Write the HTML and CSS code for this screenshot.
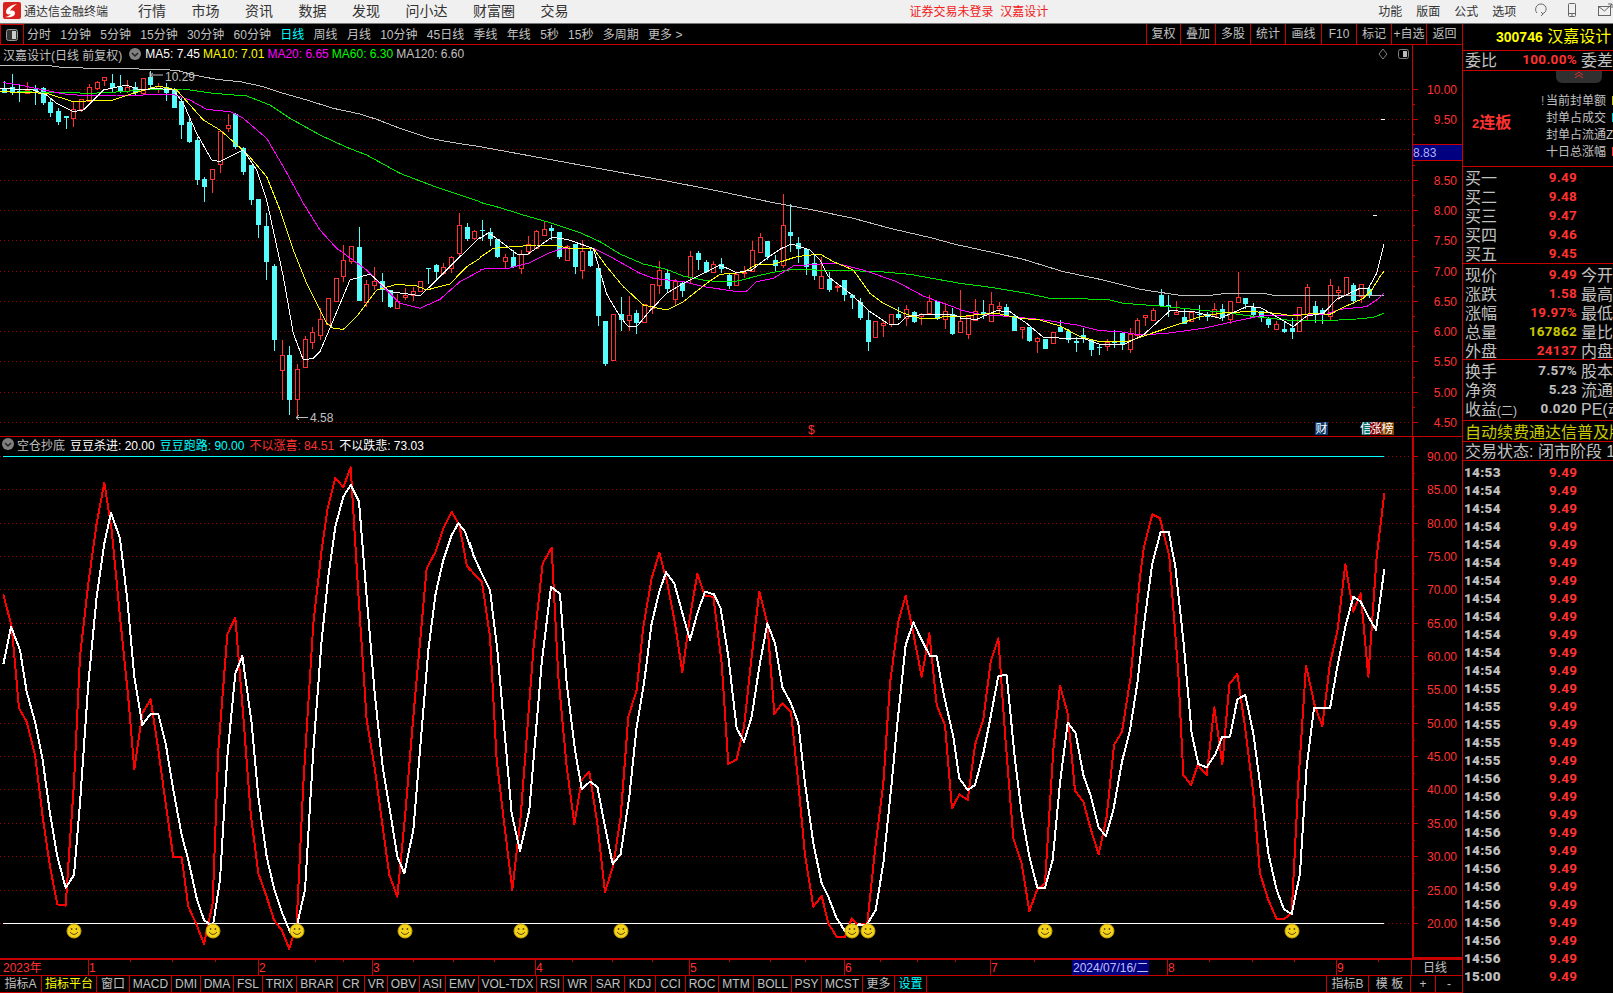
FILE: index.html
```html
<!DOCTYPE html>
<html lang="zh-CN">
<head>
    <meta charset="UTF-8">
    <title>通达信金融终端</title>
    <link rel="stylesheet" href="styles.css">
</head>
<body>
    <div class="titlebar">
        <svg class="logo" width="18" height="17" viewBox="0 0 18 17">
            <rect width="18" height="17" rx="2" fill="#d8201c"/>
            <path d="M14 2 C8 3 3 6 3 10 C3 12 5 13 8 12 C6 14 4 15 2 15 C6 16 12 15 12 11 C12 9 10 8 7 9 C8 6 11 4 14 2 Z" fill="#fff"/>
        </svg>
        <span class="app-name">通达信金融终端</span>
        <nav class="menu">
            <span>行情</span><span>市场</span><span>资讯</span><span>数据</span>
            <span>发现</span><span>问小达</span><span>财富圈</span><span>交易</span>
        </nav>
        <span class="login-note">证券交易未登录&nbsp;&nbsp;汉嘉设计</span>
        <div class="sys-menu">
            <span>功能</span><span>版面</span><span>公式</span><span>选项</span>
        </div>
        <svg class="sys-icon icon-help" width="16" height="16" viewBox="0 0 16 16" fill="none" stroke="#666">
            <path d="M4 11 C1 8 3 2 8 2 C13 2 15 8 11 11 L9 12 M8 14 L10 12 L8 10"/>
        </svg>
        <svg class="sys-icon icon-phone" width="10" height="16" viewBox="0 0 10 16" fill="none" stroke="#666">
            <rect x="1.5" y="1.5" width="7" height="13" rx="1"/><path d="M1.5 11.5 H8.5 M4 13 H6"/>
        </svg>
        <svg class="sys-icon icon-mail" width="16" height="16" viewBox="0 0 16 16" fill="none" stroke="#666">
            <rect x="1.5" y="4.5" width="12" height="9"/><path d="M1.5 4.5 L7.5 9 L15 2 M11 2 H15 V6"/>
        </svg>
    </div>

    <div class="main">
        <div class="chart-col">
            <div class="toolbar">
                <div class="layout-btn">
                    <svg width="12" height="12" viewBox="0 0 12 12"><rect x="0.5" y="0.5" width="11" height="11" rx="2" fill="#333" stroke="#999"/><rect x="6" y="2" width="4" height="8" fill="#ccc"/></svg>
                </div>
                <div class="periods">
                    <span>分时</span><span>1分钟</span><span>5分钟</span><span>15分钟</span><span>30分钟</span><span>60分钟</span>
                    <span class="on">日线</span><span>周线</span><span>月线</span><span>10分钟</span><span>45日线</span><span>季线</span>
                    <span>年线</span><span>5秒</span><span>15秒</span><span>多周期</span><span>更多 &gt;</span>
                </div>
                <div class="tool-btns">
                    <span>复权</span><span>叠加</span><span>多股</span><span>统计</span><span>画线</span><span>F10</span><span>标记</span><span>+自选</span><span>返回</span>
                </div>
            </div>

            <div class="pane pane-price">
                <div class="pane-head price-head">
                    <span class="stock-title">汉嘉设计(日线 前复权)</span>
                    <svg class="fold" width="12" height="12" viewBox="0 0 12 12"><circle cx="6" cy="6" r="6" fill="#808080"/><path d="M3 5 L6 8 L9 5" fill="none" stroke="#222" stroke-width="1.5"/></svg>
                    <span class="c-white">MA5: 7.45</span>
                    <span class="c-yellow">MA10: 7.01</span>
                    <span class="c-magenta">MA20: 6.65</span>
                    <span class="c-green">MA60: 6.30</span>
                    <span class="c-gray">MA120: 6.60</span>
                </div>
                <svg class="pane-tools" width="32" height="12" viewBox="0 0 32 12" fill="none" stroke="#808080">
                    <path d="M5 1 L9 6 L5 11 L1 6 Z"/>
                    <rect x="20.5" y="1.5" width="10" height="9" rx="2"/><rect x="25" y="3" width="4" height="6" fill="#bbb" stroke="none"/>
                </svg>
                <svg id="price-chart" width="1462" height="391" viewBox="0 45 1462 391"></svg>
            </div>

            <div class="pane pane-ind">
                <div class="pane-head ind-head">
                    <svg class="fold" width="12" height="12" viewBox="0 0 12 12"><circle cx="6" cy="6" r="6" fill="#808080"/><path d="M3 5 L6 8 L9 5" fill="none" stroke="#222" stroke-width="1.5"/></svg>
                    <span class="c-gray">空仓抄底</span>
                    <span class="c-white">豆豆杀进: 20.00</span>
                    <span class="c-cyan">豆豆跑路: 90.00</span>
                    <span class="c-red">不以涨喜: 84.51</span>
                    <span class="c-white">不以跌悲: 73.03</span>
                </div>
                <svg id="ind-chart" width="1462" height="521" viewBox="0 437 1462 521"></svg>
            </div>

            <svg id="time-axis" width="1462" height="16" viewBox="0 959 1462 16"></svg>

            <div class="tabs">
                <span>指标A</span><span class="c-yellow">指标平台</span><span>窗口</span><span>MACD</span><span>DMI</span><span>DMA</span>
                <span>FSL</span><span>TRIX</span><span>BRAR</span><span>CR</span><span>VR</span><span>OBV</span><span>ASI</span><span>EMV</span>
                <span>VOL-TDX</span><span>RSI</span><span>WR</span><span>SAR</span><span>KDJ</span><span>CCI</span><span>ROC</span><span>MTM</span>
                <span>BOLL</span><span>PSY</span><span>MCST</span><span>更多</span><span class="c-cyan">设置</span><span class="tab-gap"></span>
                <span>指标B</span><span>模 板</span><span>+</span><span>-</span>
            </div>
        </div>

        <div class="quote-panel">
            <div class="q-title"><b>300746</b> 汉嘉设计</div>
            <div class="q-row q-weibi"><span class="lbl">委比</span><span class="val c-red">100.00%</span><span class="rlbl">委差</span></div>
            <div class="q-info">
                <div class="fold-tab"><svg width="10" height="8" viewBox="0 0 10 8" fill="none" stroke="#e03030"><path d="M1 4 L5 1 L9 4 M1 7 L5 4 L9 7"/></svg></div>
                <div class="board"><small>2</small>连板</div>
                <ul class="seal-list">
                    <li><i class="warn">!</i>当前封单额<i class="sliver bg-yellow"></i></li>
                    <li>封单占成交<i class="sliver bg-cyan"></i></li>
                    <li>封单占流通Z</li>
                    <li>十日总涨幅<i class="sliver bg-red"></i></li>
                </ul>
            </div>
            <div class="q-sec q-buy">
                <div class="q-row"><span class="lbl">买一</span><span class="val c-red">9.49</span></div>
                <div class="q-row"><span class="lbl">买二</span><span class="val c-red">9.48</span></div>
                <div class="q-row"><span class="lbl">买三</span><span class="val c-red">9.47</span></div>
                <div class="q-row"><span class="lbl">买四</span><span class="val c-red">9.46</span></div>
                <div class="q-row"><span class="lbl">买五</span><span class="val c-red">9.45</span></div>
            </div>
            <div class="q-sec">
                <div class="q-row"><span class="lbl">现价</span><span class="val c-red">9.49</span><span class="rlbl">今开</span></div>
                <div class="q-row"><span class="lbl">涨跌</span><span class="val c-red">1.58</span><span class="rlbl">最高</span></div>
                <div class="q-row"><span class="lbl">涨幅</span><span class="val c-red">19.97%</span><span class="rlbl">最低</span></div>
                <div class="q-row"><span class="lbl">总量</span><span class="val c-olive">167862</span><span class="rlbl">量比</span></div>
                <div class="q-row"><span class="lbl">外盘</span><span class="val c-red">24137</span><span class="rlbl">内盘</span></div>
            </div>
            <div class="q-sec q-fin">
                <div class="q-row"><span class="lbl">换手</span><span class="val">7.57%</span><span class="rlbl">股本</span></div>
                <div class="q-row"><span class="lbl">净资</span><span class="val">5.23</span><span class="rlbl">流通</span></div>
                <div class="q-row"><span class="lbl">收益<small>(二)</small></span><span class="val">0.020</span><span class="rlbl">PE(动)</span></div>
            </div>
            <div class="q-line q-ad c-olive">自动续费通达信普及版</div>
            <div class="q-line q-state">交易状态: 闭市阶段 1</div>
            <div class="ticks" id="ticks"></div>
        </div>
    </div>

    <script src="chart.js"></script>
</body>
</html>
```
FILE: styles.css
```css
* {
    margin: 0;
    padding: 0;
    box-sizing: border-box;
}

html, body {
    height: 993px;
    overflow: hidden;
}

body {
    width: 1613px;
    background: #000;
    color: #c0c0c0;
    font-family: "Liberation Sans", "Noto Sans CJK SC", sans-serif;
    font-size: 12px;
}

.c-white { color: #fff; }
.c-yellow { color: #ffff00; }
.c-magenta { color: #ff00ff; }
.c-green { color: #00ff00; }
.c-gray { color: #c0c0c0; }
.c-cyan { color: #00ffff; }
.c-red { color: #ff3232; }
.c-olive { color: #c8c800; }

.bg-yellow { background: #c8c800; }
.bg-cyan { background: #00c8c8; }
.bg-red { background: #ff3232; }

/* top window bar */
.titlebar {
    height: 24px;
    background: #f0f0f0;
    border-bottom: 1px solid #777;
    display: flex;
    align-items: center;
    padding-bottom: 3px;
    color: #333;
    white-space: nowrap;
    overflow: hidden;
}

.titlebar > * {
    flex: none;
}

.logo {
    margin-left: 3px;
}

.app-name {
    margin-left: 3px;
}

.menu {
    display: flex;
    gap: 25.5px;
    margin-left: 30px;
    font-size: 14px;
}

.login-note {
    margin-left: 341px;
    color: #f02020;
}

.sys-menu {
    display: flex;
    gap: 14px;
    margin-left: 330px;
}

.icon-help { margin-left: 17px; }
.icon-phone { margin-left: 18px; }
.icon-mail { margin-left: 20px; }

.main {
    display: flex;
    height: 969px;
}

.chart-col {
    width: 1463px;
    border-right: 1px solid #c80000;
    display: flex;
    flex-direction: column;
    flex: none;
}

/* period toolbar */
.toolbar {
    height: 21px;
    border-bottom: 1px solid #c80000;
    display: flex;
    align-items: center;
    flex: none;
}

.layout-btn {
    width: 24px;
    height: 20px;
    border: 1px solid #c80000;
    border-bottom: none;
    display: flex;
    align-items: center;
    justify-content: center;
}

.periods {
    display: flex;
    gap: 9.3px;
    margin-left: 3px;
    margin-top: -2px;
}

.periods .on {
    color: #00ffff;
}

.tool-btns {
    margin-left: auto;
    display: grid;
    grid-template-columns: 34px 35px 35px 35px 36px 35px 35px 35px 36px;
    height: 20px;
}

.tool-btns span {
    border-left: 1px solid #c80000;
    text-align: center;
    line-height: 21px;
}

/* chart panes */
.pane {
    position: relative;
    border-bottom: 1px solid #c80000;
    flex: none;
}

.pane svg {
    display: block;
}

.pane-price {
    height: 392px;
}

.pane-ind {
    height: 522px;
}

.pane-head {
    position: absolute;
    left: 3px;
    top: 0;
    height: 18px;
    display: flex;
    align-items: center;
    white-space: nowrap;
}

.pane-head .fold {
    flex: none;
}

.price-head {
    gap: 3px;
}

.price-head .fold {
    margin: 0 1px 0 3px;
}

.price-head .stock-title {
    margin-right: 1px;
}

.ind-head {
    left: 2px;
    top: -3px;
    height: 20px;
    gap: 5px;
}

.ind-head .fold {
    margin-right: -2px;
}

.pane-tools {
    position: absolute;
    left: 1378px;
    top: 3px;
}

#time-axis {
    display: block;
    flex: none;
}

.grid-line {
    stroke: #990000;
    stroke-dasharray: 1 3;
    shape-rendering: crispEdges;
}

.axis-line {
    stroke: #c80000;
    shape-rendering: crispEdges;
}

.axis-label {
    fill: #ff3232;
    font-size: 12px;
    text-anchor: end;
    dominant-baseline: central;
}

.mark-label {
    fill: #c0c0c0;
    font-size: 12px;
    dominant-baseline: central;
}

.month-label {
    fill: #ff3232;
    font-size: 12px;
    dominant-baseline: central;
}

.cur-price {
    fill: #b0b0ff;
    font-size: 12px;
    dominant-baseline: central;
}

.badge-text {
    fill: #fff;
    font-size: 12px;
    text-anchor: middle;
    dominant-baseline: central;
}

/* indicator tabs */
.tabs {
    height: 18px;
    flex: none;
    border-top: 1px solid #c80000;
    border-bottom: 1px solid #c80000;
    display: grid;
    grid-template-columns: 42px 55px 33px 42px 29px 33px 29px 34px 41px 27px 23px 32px 26px 33px 58px 27px 28px 33px 31px 30px 33px 35px 38px 30px 41px 32px 32px 400px 42px 42px 25px 26px;
    text-align: center;
    line-height: 16px;
}

.tabs span {
    border-right: 1px solid #c80000;
}

.tabs span:last-child {
    border-right: none;
}

/* right hand quote panel */
.quote-panel {
    width: 150px;
    overflow: hidden;
    flex: none;
    white-space: nowrap;
}

.q-title {
    height: 27px;
    border-bottom: 1px solid #c80000;
    padding-left: 33px;
    font-size: 16px;
    line-height: 26px;
    color: #ffff00;
}

.q-title b {
    font-size: 14px;
}

.q-row {
    display: flex;
    align-items: center;
    height: 19px;
    padding-left: 2px;
    font-size: 16px;
}

.q-weibi {
    height: 20px;
    padding-bottom: 3px;
    border-bottom: 1px solid #c80000;
}

.lbl {
    width: 36px;
    flex: none;
}

.lbl small {
    font-size: 12px;
}

.val {
    width: 76px;
    flex: none;
    text-align: right;
    font-family: Roboto, "Liberation Sans", sans-serif;
    font-weight: bold;
    font-size: 13.5px;
    letter-spacing: 0.3px;
}

.rlbl {
    margin-left: 4px;
}

.q-info {
    position: relative;
    height: 96px;
    border-bottom: 1px solid #c80000;
    display: flex;
    align-items: center;
}

.fold-tab {
    position: absolute;
    left: 93px;
    top: 0;
    width: 46px;
    height: 12px;
    background: #303030;
    border-radius: 0 0 6px 6px;
    text-align: center;
    line-height: 8px;
}

.board {
    margin: 4px 0 0 9px;
    color: #ff3232;
    font-size: 16px;
    font-weight: bold;
}

.board small {
    font-size: 13px;
}

.seal-list {
    list-style: none;
    position: absolute;
    left: 83px;
    top: 22px;
    line-height: 17px;
}

.seal-list .sliver {
    display: inline-block;
    width: 2px;
    height: 9px;
    margin-left: 6px;
}

.seal-list .warn {
    font-style: normal;
    color: #999;
    position: absolute;
    left: -5px;
}

.q-sec {
    border-bottom: 1px solid #c80000;
}

.q-buy {
    padding-bottom: 1px;
}

.q-fin {
    padding-bottom: 3px;
}

.q-line {
    padding-left: 2px;
    font-size: 16px;
    border-bottom: 1px solid #c80000;
}

.q-ad {
    height: 21px;
    line-height: 23px;
}

.q-state {
    height: 19px;
    line-height: 19px;
}

.ticks {
    padding-top: 2px;
}

.tick-row {
    display: flex;
    height: 18px;
    align-items: center;
    padding-left: 1px;
    font-family: Roboto, "Liberation Sans", sans-serif;
    font-weight: bold;
    font-size: 13.5px;
    letter-spacing: 0.3px;
}

.tick-row b {
    width: 85px;
    flex: none;
}

.tick-row span {
    color: #ff3232;
}
```
FILE: chart.js
```js
const NS = 'http://www.w3.org/2000/svg';

function el(parent, tag, attrs, text) {
    const node = document.createElementNS(NS, tag);
    for (const key in attrs) node.setAttribute(key, attrs[key]);
    if (text !== undefined) node.textContent = text;
    parent.appendChild(node);
    return node;
}

function hline(svg, y, x1, x2, cls) {
    return el(svg, 'line', { x1: x1, x2: x2, y1: y + 0.5, y2: y + 0.5, class: cls });
}

// Candles: [high, bodyTop, bodyBottom, low, 'c' down / 'r' up], in thirds of a px from yo
const CANDLES = [
    [60, [
        [62,88,98,100,'c'],[42,82,95,105,'c'],[75,92,95,125,'c'],[65,90,100,100,'r'],[75,88,92,135,'c'],
        [82,84,130,135,'c'],[115,127,158,170,'c'],[145,152,186,195,'c'],[168,168,173,207,'c'],[125,146,173,200,'r'],
        [118,118,146,155,'r'],[72,80,122,125,'r'],[62,67,83,90,'r'],[52,52,60,78,'r'],[42,70,85,95,'c'],
        [45,82,92,100,'c'],[60,82,92,100,'r'],[65,80,100,105,'c'],[55,55,100,105,'r'],[32,52,76,85,'c'],
        [68,78,86,100,'r'],[68,82,100,122,'c'],[85,90,143,145,'c'],[110,123,194,237,'c'],[175,186,246,248,'c'],
        [232,240,360,375,'c'],[350,357,380,425,'c'],[327,327,358,400,'r'],[212,214,313,338,'r'],[162,196,205,215,'r'],
        [160,162,260,266,'c'],[262,265,335,345,'c'],[315,316,420,435,'c'],[418,418,495,534,'c'],[460,498,605,660,'c'],
        [612,618,840,873,'c'],[840,886,930,1020,'r'],[858,885,1020,1065,'c'],[912,928,1018,1070,'r'],[828,838,920,922,'r'],
        [800,817,845,867,'r'],[745,778,824,840,'r'],[715,715,792,795,'r'],[655,655,722,722,'r'],[555,601,647,665,'r'],
        [559,559,603,612,'r'],[502,561,723,723,'c'],[660,673,725,740,'r'],[622,664,675,690,'r'],[640,664,690,725,'c'],
        [690,690,741,745,'c'],[703,722,743,743,'r'],[685,705,711,720,'r'],[682,694,705,722,'r'],[664,664,692,697,'r'],
        [625,625,628,672,'c'],[612,615,636,657,'c'],[610,620,638,645,'r'],[588,592,623,640,'r'],[460,496,580,590,'r'],
        [490,502,538,542,'c'],[510,512,535,540,'r']
    ]],
    [180, [
        [120,150,153,182,'c'],[145,156,176,198,'c'],[178,178,232,234,'c'],[222,232,242,265,'r'],[210,232,262,264,'c'],
        [210,221,265,282,'r'],[168,192,212,226,'r'],[150,154,204,206,'r'],[125,148,164,164,'r'],[135,144,153,180,'c'],
        [156,156,232,236,'c'],[196,198,239,239,'r'],[193,193,261,282,'c'],[180,214,270,297,'r'],[200,214,259,262,'c'],
        [255,264,408,438,'c'],[423,423,552,558,'c'],[403,403,539,539,'r'],[352,403,420,453,'c'],[348,406,419,452,'r'],
        [390,400,430,462,'c'],[372,372,425,430,'r'],[313,313,385,402,'r'],[243,270,315,342,'r'],[268,279,328,335,'c'],
        [298,302,356,376,'r'],[305,310,334,350,'c'],[214,229,292,310,'r'],[214,220,240,270,'c'],[240,246,277,278,'c'],
        [243,252,275,275,'r'],[235,253,267,278,'c'],[282,285,318,327,'c'],[278,282,314,314,'r'],[259,275,279,294,'r'],
        [183,211,273,275,'r'],[160,172,215,215,'r'],[183,183,232,240,'c'],[225,240,258,272,'c'],[42,136,254,263,'r'],
        [72,156,168,215,'c'],[172,190,207,250,'c'],[208,208,261,285,'c'],[225,250,288,300,'c'],[230,289,323,323,'r'],
        [276,297,330,336,'c'],[312,319,322,336,'r'],[300,300,345,363,'c'],[343,345,354,387,'c'],[355,366,414,421,'c'],
        [390,420,486,513,'c'],[424,424,470,470,'r'],[422,429,434,471,'r'],[403,403,432,441,'r'],[382,402,414,420,'c'],
        [375,388,414,438,'r'],[393,396,425,428,'c'],[400,401,407,435,'r'],[345,364,400,400,'r'],[364,364,417,420,'c'],
        [368,394,416,447,'r'],[383,402,462,465,'c'],[330,424,455,455,'r']
    ]],
    [220, [
        [285,288,342,356,'r'],[238,272,300,302,'r'],[240,277,284,296,'c'],[215,253,302,302,'r'],[247,258,264,280,'r'],
        [252,262,290,292,'c'],[285,288,333,333,'c'],[322,322,328,358,'r'],[320,322,363,365,'c'],[350,355,363,400,'r'],
        [356,358,387,387,'c'],[337,337,368,368,'r'],[300,322,336,337,'c'],[328,332,360,368,'c'],[352,364,369,395,'c'],
        [324,345,358,368,'c'],[358,360,390,408,'c'],[375,380,382,405,'c'],[358,366,379,392,'r'],[330,366,370,385,'c'],
        [338,338,372,390,'c'],[324,343,388,398,'r'],[293,301,345,355,'r'],[285,286,290,318,'r'],[265,269,300,302,'r'],
        [208,225,259,262,'c'],[225,255,260,290,'c'],[243,276,282,285,'r'],[265,291,311,312,'c'],[275,277,302,302,'r'],
        [255,282,286,300,'c'],[275,282,290,302,'c'],[248,268,288,290,'r'],[252,267,293,302,'c'],[243,243,296,312,'r'],
        [155,232,245,245,'r'],[234,234,252,268,'c'],[250,262,285,288,'c'],[274,274,290,305,'c'],[292,297,315,325,'c'],
        [302,312,326,326,'r'],[305,327,336,338,'c'],[295,324,335,356,'c'],[262,262,332,332,'r'],[192,202,282,302,'r'],
        [244,258,284,310,'c'],[265,270,280,312,'c'],[178,196,288,300,'r'],[197,210,215,240,'r'],[172,172,224,224,'r'],
        [190,196,243,252,'c'],[193,193,228,248,'r'],[195,207,228,235,'c']
    ]]
];

// Moving averages: flat x,y lists per stretch, in thirds of a px from the stretch origin
const PRICE_ORIGINS = [[0, 60], [480, 180], [960, 220]];
const MA_LINES = [
    { color: '#c0c0c0', parts: [
        [0,16,140,16,185,22,280,25,485,28,535,32,580,45,650,58,720,65,790,80,850,100,920,120,1000,145,1080,162,1130,178,1200,205,1290,235,1360,248,1440,260],
        [545,0,700,30,880,68,1000,90,1120,115,1230,145,1360,175,1440,197],
        [0,76,110,100,190,118,310,155,430,180,540,208,660,226,750,226,800,220,910,220,940,226,1272,228]
    ] },
    { color: '#00e600', parts: [
        [60,95,130,97,210,98,270,100,370,95,440,88,550,87,640,100,740,108,810,135,870,175,960,225,1040,262,1100,285,1200,340,1300,378,1380,405,1440,425],
        [0,67,60,83,130,105,210,128,300,158,360,185,420,222,490,252,560,268,610,288,680,302,740,306,780,302,830,288,880,277,940,268,1040,271,1190,274,1290,283,1440,310],
        [0,190,100,203,200,220,270,235,360,236,450,240,490,250,600,258,700,268,800,278,900,292,1000,302,1100,302,1190,297,1240,292,1272,280]
    ] },
    { color: '#ff00ff', parts: [
        [10,68,60,75,130,90,200,103,280,108,350,105,430,105,520,103,570,120,620,148,690,155,730,175,800,235,850,320,910,430,960,510,1010,565,1100,630,1140,670,1200,730,1260,745,1320,718,1380,665,1440,633],
        [0,270,20,265,85,265,150,248,210,218,250,205,340,205,400,235,480,280,520,295,610,305,670,320,760,333,800,333,830,305,880,295,940,258,1020,252,1070,250,1150,270,1250,305,1330,348,1440,388],
        [0,270,60,283,130,288,240,298,350,315,420,332,480,335,540,345,620,340,730,325,820,305,900,288,1000,285,1100,282,1140,268,1220,260,1250,240,1272,220]
    ] },
    { color: '#ffff00', parts: [
        [0,95,60,97,140,100,220,125,280,122,340,120,400,100,475,78,530,90,610,180,660,210,740,280,800,350,840,450,880,570,920,670,980,790,1000,805,1030,808,1070,770,1130,690,1190,673,1250,678,1280,690,1350,672,1400,620,1440,595],
        [0,232,40,205,100,200,170,195,220,195,270,205,340,205,380,260,430,320,490,375,560,390,610,365,680,310,720,283,790,277,830,253,880,253,950,230,1020,222,1060,245,1120,270,1170,340,1210,370,1270,400,1320,415,1370,415,1400,408,1440,410],
        [0,290,60,283,110,280,180,295,240,300,300,318,360,350,420,365,500,365,560,345,640,318,720,290,800,277,880,275,950,280,1000,288,1060,280,1110,283,1150,262,1210,235,1235,210,1260,170,1272,153]
    ] },
    { color: '#ffffff', parts: [
        [0,85,100,90,140,105,170,130,220,155,250,150,310,90,380,75,420,90,470,85,520,90,550,130,590,220,635,300,660,305,730,270,770,330,800,420,850,650,880,820,910,900,940,895,960,875,1000,780,1050,660,1110,642,1170,695,1260,707,1300,670,1380,590,1440,532],
        [0,175,25,158,60,183,110,222,140,225,215,172,260,178,340,205,380,342,420,410,445,440,470,440,510,392,560,340,610,310,650,290,720,255,770,278,815,270,860,235,905,205,935,192,990,210,1020,240,1045,290,1110,340,1170,395,1225,432,1255,433,1280,410,1340,402,1400,402,1440,410],
        [0,295,50,298,110,272,150,275,200,310,250,352,320,355,370,355,420,373,490,375,550,345,630,272,700,275,780,295,860,260,900,262,950,290,1000,320,1040,288,1090,280,1130,238,1200,205,1225,205,1250,160,1272,72]
    ] }
];

const IND_ORIGINS = [[0, 450], [470, 450], [940, 450]];
const IND_LINES = [
    { color: '#ff0000', parts: [
        [10,433,35,530,45,640,57,775,80,815,105,915,128,1100,150,1250,172,1363,197,1367,208,1200,222,1000,240,620,265,400,290,220,313,98,335,240,360,500,385,745,403,958,427,790,452,748,475,900,497,1060,520,1222,545,1222,565,1370,590,1425,612,1482,638,1360,655,900,682,553,706,503,730,800,752,1090,775,1270,800,1340,822,1410,845,1440,868,1497,890,1420,910,1000,940,520,965,300,982,180,1006,83,1030,112,1052,52,1075,430,1100,810,1125,960,1148,1130,1168,1275,1192,1340,1215,1100,1240,800,1280,355,1307,305,1330,235,1355,185,1378,225,1400,345,1410,360],
        [0,358,36,397,60,560,80,930,105,1140,127,1320,152,1100,190,600,218,340,245,293,265,680,290,950,313,1122,335,990,358,965,382,1120,405,1327,430,1245,452,1100,475,800,500,720,520,530,545,385,568,308,592,400,615,520,637,667,660,500,682,372,705,438,730,440,755,640,775,942,800,928,822,830,845,620,868,425,892,520,913,792,937,760,963,785,985,1000,1005,1215,1030,1370,1055,1338,1075,1420,1100,1460,1125,1460,1145,1405,1165,1425,1192,1420,1215,1200,1240,1000,1260,700,1285,515,1307,437,1330,550,1355,680,1378,550,1400,765,1410,790],
        [15,825,36,1075,58,1033,83,1050,105,885,130,808,152,635,175,565,195,850,220,1165,245,1240,268,1383,292,1318,315,1300,340,900,360,707,383,790,405,1022,430,1055,453,1140,476,1213,500,1100,522,885,546,845,572,680,600,380,612,290,637,193,660,205,688,320,715,670,730,975,753,1005,773,945,800,975,823,772,847,943,868,703,892,672,915,830,940,1030,960,1270,985,1350,1010,1407,1032,1407,1055,1390,1075,1000,1098,647,1125,770,1147,828,1170,640,1192,545,1216,343,1240,485,1262,430,1285,680,1310,320,1333,130]
    ] },
    { color: '#ffffff', parts: [
        [10,643,33,530,60,600,80,725,105,815,128,930,150,1090,172,1220,197,1313,222,1275,240,1060,265,700,290,440,313,280,333,188,360,265,382,450,403,680,427,825,452,792,475,792,497,880,520,1020,545,1155,565,1230,590,1345,612,1410,628,1422,640,1420,660,1290,682,920,706,670,727,618,755,820,775,1040,800,1220,822,1315,845,1385,870,1445,890,1430,915,1320,940,900,965,570,985,380,1006,230,1030,140,1052,105,1077,155,1100,440,1125,740,1148,950,1168,1070,1192,1220,1213,1270,1240,1140,1260,900,1285,600,1307,430,1330,330,1355,255,1375,220,1395,245,1410,290],
        [0,280,10,315,35,370,60,420,82,600,105,860,125,1090,150,1203,178,1080,215,640,243,410,270,432,290,700,315,900,335,1017,360,995,382,1010,405,1130,428,1242,452,1212,478,1040,500,830,522,700,545,520,568,425,588,367,613,400,640,500,660,570,682,490,705,425,732,433,752,475,775,620,800,835,822,875,845,800,868,650,892,520,915,580,937,712,963,760,985,820,1005,1000,1030,1180,1055,1300,1075,1340,1100,1405,1125,1443,1145,1435,1165,1425,1190,1425,1217,1380,1240,1240,1265,1000,1280,840,1307,585,1330,517,1355,570,1380,618,1400,618,1410,675],
        [15,750,40,860,58,985,83,1020,105,1005,130,910,152,800,175,678,200,675,225,930,245,1090,268,1220,292,1313,315,1313,338,1230,360,1000,383,818,407,850,430,975,453,1040,476,1133,498,1158,520,1080,546,935,570,840,592,700,615,500,637,340,662,245,686,245,706,350,730,570,755,850,775,942,800,952,825,915,847,860,870,860,892,748,916,735,940,850,960,1000,985,1210,1010,1320,1032,1378,1055,1392,1080,1270,1100,950,1122,775,1170,775,1192,650,1216,530,1240,440,1262,455,1285,500,1308,540,1333,358]
    ] }
];

function polyline(svg, line, origins, width) {
    const points = [];
    line.parts.forEach((part, p) => {
        for (let i = 0; i < part.length; i += 2) {
            points.push((origins[p][0] + part[i] / 3) + ',' + (origins[p][1] + part[i + 1] / 3));
        }
    });
    el(svg, 'polyline', {
        points: points.join(' '),
        fill: 'none',
        stroke: line.color,
        'stroke-width': width,
        'stroke-linejoin': 'round',
        'shape-rendering': 'crispEdges'
    });
}

function drawCandles(svg) {
    let i = 0;
    CANDLES.forEach(([yo, rows]) => {
        rows.forEach(([hi, top, bot, lo, kind]) => {
            const cx = Math.round(4 + 7.71 * i) + 0.5;
            const yHi = Math.round(yo + hi / 3), yTop = Math.round(yo + top / 3);
            const yBot = Math.max(Math.round(yo + bot / 3), yTop + 1), yLo = Math.round(yo + lo / 3);
            const color = kind === 'c' ? '#54fcfc' : '#ff3232';
            el(svg, 'line', { x1: cx, x2: cx, y1: yHi, y2: yTop, stroke: color, 'shape-rendering': 'crispEdges' });
            el(svg, 'line', { x1: cx, x2: cx, y1: yBot, y2: yLo, stroke: color, 'shape-rendering': 'crispEdges' });
            if (kind === 'c') {
                el(svg, 'rect', { x: cx - 2.5, y: yTop, width: 5, height: yBot - yTop, fill: color, 'shape-rendering': 'crispEdges' });
            } else {
                el(svg, 'rect', { x: cx - 2, y: yTop + 0.5, width: 4, height: yBot - yTop, fill: '#000', stroke: color, 'shape-rendering': 'crispEdges' });
            }
            i++;
        });
    });
}

function drawAxis(svg, levels, y1, y2) {
    el(svg, 'line', { x1: 1412.5, x2: 1412.5, y1: y1, y2: y2, class: 'axis-line' });
    levels.forEach(([y, label], n) => {
        hline(svg, y, 0, 1412, 'grid-line');
        hline(svg, y, 1412, 1418, 'axis-line');
        if (label) el(svg, 'text', { x: 1457, y: y + 0.5, class: 'axis-label' }, label);
        if (n < levels.length - 1) {
            hline(svg, Math.round((y + levels[n + 1][0]) / 2), 1412, 1415, 'axis-line');
        }
    });
}

function drawPrice() {
    const svg = document.getElementById('price-chart');
    drawAxis(svg, [
        [89, '10.00'], [119, '9.50'], [149, ''], [180, '8.50'], [210, '8.00'], [240, '7.50'],
        [271, '7.00'], [301, '6.50'], [331, '6.00'], [361, '5.50'], [392, '5.00'], [422, '4.50']
    ], 45, 436);

    // current cursor price on the axis
    el(svg, 'rect', { x: 1413, y: 144, width: 49, height: 16, fill: '#000080' });
    hline(svg, 144, 1412, 1462, 'axis-line');
    hline(svg, 160, 1412, 1462, 'axis-line');
    el(svg, 'text', { x: 1413, y: 152.5, class: 'cur-price' }, '8.83');

    drawCandles(svg);
    MA_LINES.forEach(line => polyline(svg, line, PRICE_ORIGINS, 1));

    // high/low marks
    el(svg, 'path', { d: 'M150 72 V79 M150 75 H163 M150 75 L153 73 M150 75 L153 77', stroke: '#c0c0c0', fill: 'none' });
    el(svg, 'text', { x: 165, y: 76.5, class: 'mark-label' }, '10.29');
    el(svg, 'path', { d: 'M296 417.5 H308 M296 417.5 L299 415 M296 417.5 L299 420', stroke: '#c0c0c0', fill: 'none' });
    el(svg, 'text', { x: 310, y: 418, class: 'mark-label' }, '4.58');

    // white dashes at the right edge
    el(svg, 'rect', { x: 1381, y: 119, width: 4, height: 1, fill: '#fff' });
    el(svg, 'rect', { x: 1373, y: 215, width: 4, height: 1, fill: '#fff' });
    el(svg, 'text', { x: 808, y: 430, fill: '#ff3232', 'font-size': 12, 'dominant-baseline': 'central' }, '$');

    // news / list badges
    [[1315, 13, '#0a3a6e', '财'], [1362, 8, '#0a7070', '信'], [1370, 11, '#800000', '涨'], [1381, 13, '#804000', '榜']].forEach(([x, w, bg, t]) => {
        el(svg, 'rect', { x: x, y: 422, width: w, height: 13, fill: bg });
        el(svg, 'text', { x: x + w / 2, y: 428.5, class: 'badge-text' }, t);
    });
}

function smiley(svg, cx, cy) {
    el(svg, 'circle', { cx: cx, cy: cy, r: 7, fill: '#f2d21a', stroke: '#c8a400' });
    el(svg, 'circle', { cx: cx - 2.4, cy: cy - 2, r: 0.9, fill: '#604800' });
    el(svg, 'circle', { cx: cx + 2.4, cy: cy - 2, r: 0.9, fill: '#604800' });
    el(svg, 'path', { d: `M${cx - 4} ${cy + 1} Q${cx} ${cy + 6} ${cx + 4} ${cy + 1}`, stroke: '#604800', fill: 'none' });
}

function drawIndicator() {
    const svg = document.getElementById('ind-chart');
    const labels = [90, 85, 80, 75, 70, 65, 60, 55, 50, 45, 40, 35, 30, 25, 20];
    const ys = [456, 489, 523, 556, 589, 623, 656, 689, 723, 756, 789, 823, 856, 890, 923];
    drawAxis(svg, ys.map((y, n) => [y, labels[n].toFixed(2)]), 437, 958);
    el(svg, 'line', { x1: 1413.5, x2: 1413.5, y1: 437, y2: 958, class: 'axis-line' });
    hline(svg, 957, 1412, 1462, 'axis-line');

    hline(svg, 456, 3, 1384, 'ind-top').setAttribute('stroke', '#00ffff');
    hline(svg, 923, 3, 1384, 'ind-base').setAttribute('stroke', '#ffffff');

    IND_LINES.forEach(line => polyline(svg, line, IND_ORIGINS, 2));
    [74, 213, 297, 405, 521, 621, 852, 868, 1045, 1107, 1292].forEach(x => smiley(svg, x, 931));
}

function drawTimeAxis() {
    const svg = document.getElementById('time-axis');
    hline(svg, 959, 0, 1462, 'axis-line');
    el(svg, 'text', { x: 3, y: 968, class: 'month-label' }, '2023年');
    [[88, '1'], [258, '2'], [372, '3'], [535, '4'], [689, '5'], [844, '6'], [990, '7'], [1167, '8'], [1336, '9']].forEach(([x, t]) => {
        el(svg, 'line', { x1: x + 0.5, x2: x + 0.5, y1: 959, y2: 975, class: 'axis-line' });
        el(svg, 'text', { x: x + 1, y: 968, class: 'month-label' }, t);
    });
    [130, 172, 215, 315, 343, 413, 453, 494, 572, 612, 652, 729, 770, 805, 880, 917, 955, 1034, 1209, 1252, 1294, 1378].forEach(x => {
        el(svg, 'line', { x1: x + 0.5, x2: x + 0.5, y1: 960, y2: 962, class: 'axis-line' });
    });
    el(svg, 'rect', { x: 1072, y: 960, width: 77, height: 15, fill: '#000080' });
    el(svg, 'text', { x: 1073, y: 968, class: 'month-label', style: 'fill:#c0c0ff' }, '2024/07/16/二');
    el(svg, 'line', { x1: 1411.5, x2: 1411.5, y1: 959, y2: 975, class: 'axis-line' });
    el(svg, 'text', { x: 1423, y: 968, class: 'mark-label' }, '日线');
}

function drawTicks() {
    const box = document.getElementById('ticks');
    const times = ['14:53'];
    for (let i = 0; i < 11; i++) times.push('14:54');
    for (let i = 0; i < 5; i++) times.push('14:55');
    for (let i = 0; i < 11; i++) times.push('14:56');
    times.push('15:00');
    times.forEach(t => {
        const row = document.createElement('div');
        row.className = 'tick-row';
        row.innerHTML = `<b>${t}</b><span>9.49</span>`;
        box.appendChild(row);
    });
}

drawPrice();
drawIndicator();
drawTimeAxis();
drawTicks();
```
